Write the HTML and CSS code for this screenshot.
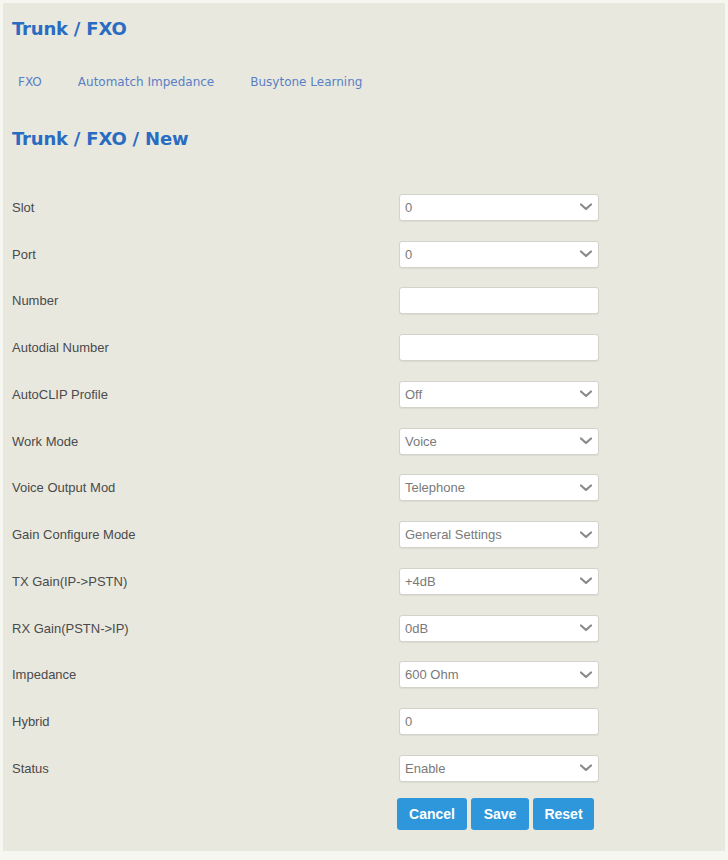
FILE: index.html
```html
<!DOCTYPE html>
<html>
<head>
<meta charset="utf-8">
<link rel="stylesheet" href="styles.css">
</head>
<body>
<div class="page">
  <h1 class="title">Trunk / FXO</h1>
  <nav class="tabs">
    <span class="tab">FXO</span>
    <span class="tab">Automatch Impedance</span>
    <span class="tab">Busytone Learning</span>
  </nav>
  <h2 class="title sub">Trunk / FXO / New</h2>
  <form class="form">
    <div class="row"><span class="label">Slot</span><div class="field select"><span>0</span><svg class="chev" viewBox="0 0 12 8"><path d="M1 1.5 L6 6 L11 1.5"/></svg></div></div>
    <div class="row"><span class="label">Port</span><div class="field select"><span>0</span><svg class="chev" viewBox="0 0 12 8"><path d="M1 1.5 L6 6 L11 1.5"/></svg></div></div>
    <div class="row"><span class="label">Number</span><div class="field input"></div></div>
    <div class="row"><span class="label">Autodial Number</span><div class="field input"></div></div>
    <div class="row"><span class="label">AutoCLIP Profile</span><div class="field select"><span>Off</span><svg class="chev" viewBox="0 0 12 8"><path d="M1 1.5 L6 6 L11 1.5"/></svg></div></div>
    <div class="row"><span class="label">Work Mode</span><div class="field select"><span>Voice</span><svg class="chev" viewBox="0 0 12 8"><path d="M1 1.5 L6 6 L11 1.5"/></svg></div></div>
    <div class="row"><span class="label">Voice Output Mod</span><div class="field select"><span>Telephone</span><svg class="chev" viewBox="0 0 12 8"><path d="M1 1.5 L6 6 L11 1.5"/></svg></div></div>
    <div class="row"><span class="label">Gain Configure Mode</span><div class="field select"><span>General Settings</span><svg class="chev" viewBox="0 0 12 8"><path d="M1 1.5 L6 6 L11 1.5"/></svg></div></div>
    <div class="row"><span class="label">TX Gain(IP-&gt;PSTN)</span><div class="field select"><span>+4dB</span><svg class="chev" viewBox="0 0 12 8"><path d="M1 1.5 L6 6 L11 1.5"/></svg></div></div>
    <div class="row"><span class="label">RX Gain(PSTN-&gt;IP)</span><div class="field select"><span>0dB</span><svg class="chev" viewBox="0 0 12 8"><path d="M1 1.5 L6 6 L11 1.5"/></svg></div></div>
    <div class="row"><span class="label">Impedance</span><div class="field select"><span>600 Ohm</span><svg class="chev" viewBox="0 0 12 8"><path d="M1 1.5 L6 6 L11 1.5"/></svg></div></div>
    <div class="row"><span class="label">Hybrid</span><div class="field input"><span>0</span></div></div>
    <div class="row"><span class="label">Status</span><div class="field select"><span>Enable</span><svg class="chev" viewBox="0 0 12 8"><path d="M1 1.5 L6 6 L11 1.5"/></svg></div></div>
    <div class="buttons">
      <button type="button" class="btn cancel">Cancel</button>
      <button type="button" class="btn save">Save</button>
      <button type="button" class="btn reset">Reset</button>
    </div>
  </form>
</div>
</body>
</html>
```
FILE: styles.css
```css
html, body {
  margin: 0;
  padding: 0;
  background: #f7f7f2;
}
body {
  padding: 3px 3px 0 3px;
  font-family: "Liberation Sans", Arial, sans-serif;
}
.page {
  background: #e8e8df;
  height: 848px;
  width: 722px;
  box-sizing: border-box;
  padding: 16px 0 0 9px;
}
.title {
  margin: 0;
  font-family: "DejaVu Sans", Verdana, sans-serif;
  font-weight: bold;
  font-size: 18px;
  letter-spacing: -0.2px;
  color: #2a6cc2;
  line-height: 20px;
}
.tabs {
  display: flex;
  gap: 36px;
  padding: 36px 0 0 6px;
  height: 48px;
  box-sizing: border-box;
}
.tab {
  font-family: "DejaVu Sans", Verdana, sans-serif;
  font-size: 12px;
  color: #5a7fc4;
  line-height: 14px;
}
.sub {
  margin-top: 42px;
}
.form {
  margin-top: 35px;
  display: flex;
  flex-direction: column;
}
.row {
  display: flex;
  align-items: center;
  height: 46.75px;
}
.label {
  width: 387px;
  font-size: 13px;
  color: #4a4a4a;
}
.field {
  width: 200px;
  height: 27px;
  box-sizing: border-box;
  background: #ffffff;
  border: 1px solid #d3d3cc;
  border-radius: 3px;
  box-shadow: 0 1px 1px rgba(0,0,0,0.06);
  display: flex;
  align-items: center;
  justify-content: space-between;
  padding: 0 6px 0 5px;
  font-size: 13px;
  color: #7a7a7a;
}
.chev {
  width: 12px;
  height: 8px;
}
.chev path {
  fill: none;
  stroke: #8a8a8a;
  stroke-width: 2.2;
  stroke-linecap: round;
  stroke-linejoin: round;
}
.buttons {
  display: flex;
  gap: 4px;
  padding-left: 385px;
  margin-top: 6px;
}
.btn {
  height: 32px;
  border: none;
  border-radius: 3px;
  background: #2e97dc;
  color: #ffffff;
  font-family: "Liberation Sans", Arial, sans-serif;
  font-weight: bold;
  font-size: 14px;
  padding: 0;
}
.cancel { width: 70px; }
.save { width: 58px; }
.reset { width: 61px; }
```
